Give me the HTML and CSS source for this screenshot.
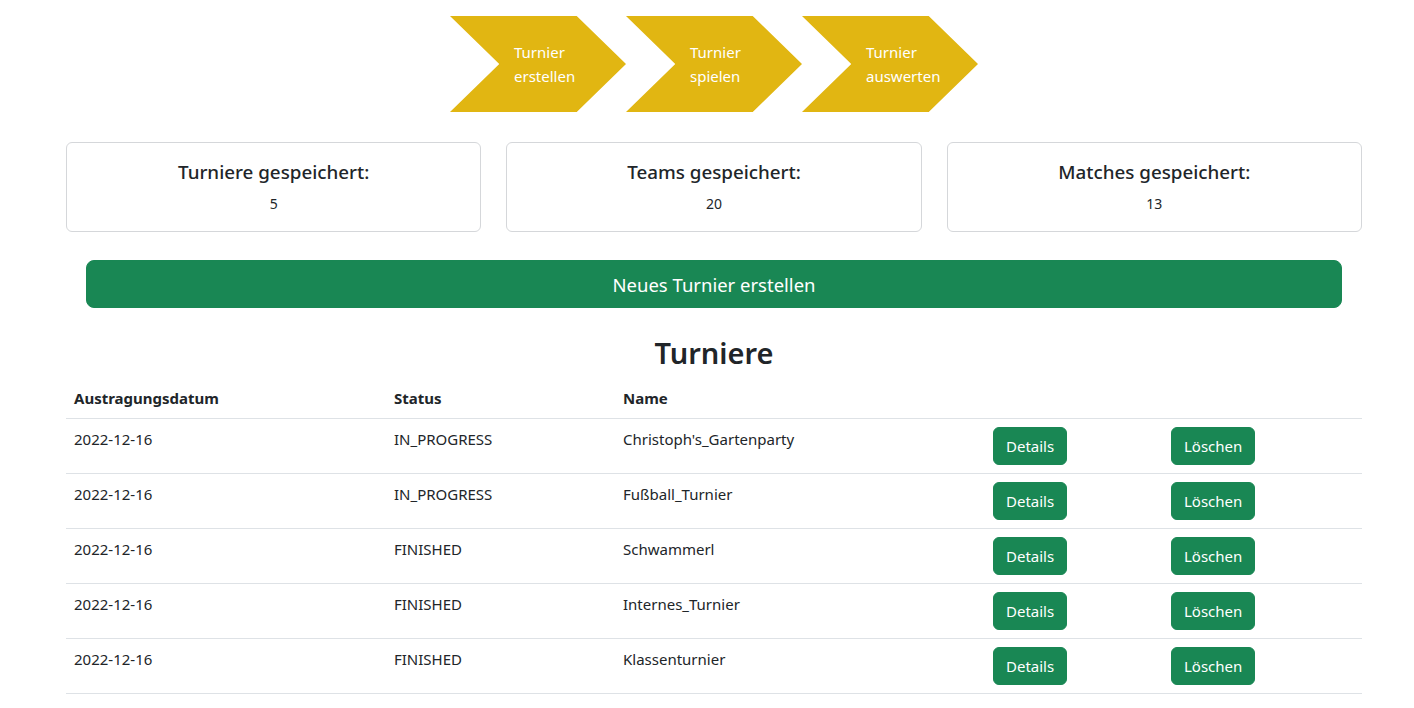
FILE: index.html
```html
<!DOCTYPE html>
<html lang="de">
<head>
<meta charset="utf-8">
<title>Turniere</title>
<link rel="stylesheet" href="styles.css">
</head>
<body>
<div class="page">
  <div class="steps">
    <div class="step"><span>Turnier<br>erstellen</span></div>
    <div class="step"><span>Turnier<br>spielen</span></div>
    <div class="step"><span>Turnier<br>auswerten</span></div>
  </div>

  <div class="cards">
    <div class="card">
      <h5 class="card-title">Turniere gespeichert:</h5>
      <p class="card-text">5</p>
    </div>
    <div class="card">
      <h5 class="card-title">Teams gespeichert:</h5>
      <p class="card-text">20</p>
    </div>
    <div class="card">
      <h5 class="card-title">Matches gespeichert:</h5>
      <p class="card-text">13</p>
    </div>
  </div>

  <div class="new-wrap">
    <button class="btn btn-lg">Neues Turnier erstellen</button>
  </div>

  <h2 class="heading">Turniere</h2>

  <table class="table">
    <colgroup>
      <col class="c1"><col class="c2"><col class="c3"><col class="c4"><col class="c5">
    </colgroup>
    <thead>
      <tr><th>Austragungsdatum</th><th>Status</th><th>Name</th><th></th><th></th></tr>
    </thead>
    <tbody>
      <tr><td>2022-12-16</td><td>IN_PROGRESS</td><td>Christoph's_Gartenparty</td><td><button class="btn">Details</button></td><td><button class="btn">Löschen</button></td></tr>
      <tr><td>2022-12-16</td><td>IN_PROGRESS</td><td>Fußball_Turnier</td><td><button class="btn">Details</button></td><td><button class="btn">Löschen</button></td></tr>
      <tr><td>2022-12-16</td><td>FINISHED</td><td>Schwammerl</td><td><button class="btn">Details</button></td><td><button class="btn">Löschen</button></td></tr>
      <tr><td>2022-12-16</td><td>FINISHED</td><td>Internes_Turnier</td><td><button class="btn">Details</button></td><td><button class="btn">Löschen</button></td></tr>
      <tr><td>2022-12-16</td><td>FINISHED</td><td>Klassenturnier</td><td><button class="btn">Details</button></td><td><button class="btn">Löschen</button></td></tr>
    </tbody>
  </table>
</div>
</body>
</html>
```

FILE: styles.css
```css
* { box-sizing: border-box; }
html, body {
  margin: 0;
  padding: 0;
  background: #fff;
}
body {
  font-family: "Noto Sans", "Open Sans", sans-serif;
  font-size: 16px;
  line-height: 1.5;
  color: #212529;
}
.page {
  width: 1296px;
  margin-left: 66px;
  padding-top: 16px;
}
.steps {
  display: flex;
  justify-content: center;
}
.step {
  width: 176px;
  height: 96px;
  background: #e1b612;
  clip-path: polygon(0 0, 72% 0, 100% 50%, 72% 100%, 0 100%, 28% 50%);
  display: flex;
  align-items: center;
  padding-left: 64px;
  color: #fff;
  font-size: 15px;
  line-height: 24px;
}
.cards {
  display: flex;
  gap: 25px;
  margin-top: 30px;
}
.card {
  flex: 1;
  border: 1px solid #d5d7da;
  border-radius: 6px;
  padding: 17px 16px 14px;
  text-align: center;
  height: 90px;
}
.card-title {
  margin: 0 0 8px;
  font-size: 18.8px;
  font-weight: 500;
  line-height: 24px;
}
.card-text {
  margin: 0;
  font-size: 14px;
  line-height: 24px;
}
.new-wrap {
  padding: 0 20px;
  margin-top: 28px;
}
.btn {
  background: #198754;
  color: #fff;
  border: 1px solid #198754;
  border-radius: 6px;
  font-family: inherit;
  font-size: 15px;
  line-height: 24px;
  padding: 6px 12px;
  cursor: pointer;
}
.btn-lg {
  width: 100%;
  height: 48px;
  font-size: 18.5px;
  padding: 9px 16px 7px;
  border-radius: 8px;
}
.heading {
  margin: 26px 0 6px;
  text-align: center;
  font-size: 29px;
  font-weight: 600;
  line-height: 38px;
}
.table {
  width: 100%;
  border-collapse: collapse;
  table-layout: fixed;
}
.c1 { width: 320px; }
.c2 { width: 229px; }
.c3 { width: 370px; }
.c4 { width: 178px; }
.c5 { width: 199px; }
.table th {
  text-align: left;
  font-weight: 700;
  font-size: 15px;
  padding: 8px;
  line-height: 24px;
  border-bottom: 1px solid #dee2e6;
}
.table td {
  font-size: 15px;
  padding: 8px;
  line-height: 24px;
  vertical-align: top;
  border-bottom: 1px solid #dee2e6;
  height: 55px;
}
.table td .btn { margin-top: 0; }
```
